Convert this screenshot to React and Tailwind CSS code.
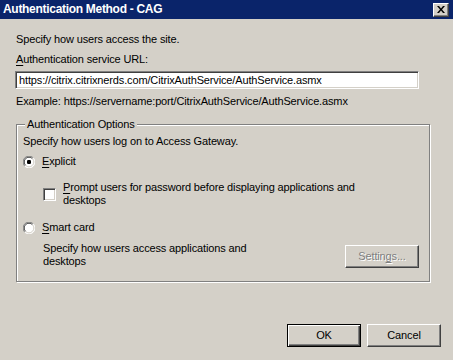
import React from "react";

function Radio({ checked }) {
  return (
    <div className="relative w-[12px] h-[12px] shrink-0">
      <svg width="12" height="12" viewBox="0 0 12 12" className="block">
        <circle cx="6" cy="6" r="5.5" fill="#fff" />
        <path d="M10.2 1.8 A5.5 5.5 0 0 0 1.8 10.2" fill="none" stroke="#808080" strokeWidth="1" />
        <path d="M9.4 2.6 A4.5 4.5 0 0 0 2.6 9.4" fill="none" stroke="#404040" strokeWidth="1" />
        <path d="M1.8 10.2 A5.5 5.5 0 0 0 10.2 1.8" fill="none" stroke="#ffffff" strokeWidth="1" />
        <path d="M2.6 9.4 A4.5 4.5 0 0 0 9.4 2.6" fill="none" stroke="#d4d0c8" strokeWidth="1" />
        {checked && <rect x="4" y="4" width="4" height="4" rx="1.2" fill="#000" />}
      </svg>
    </div>
  );
}

function Checkbox() {
  return (
    <div className="w-[13px] h-[13px] shrink-0 bg-white border border-t-[#808080] border-l-[#808080] border-r-white border-b-white shadow-[inset_1px_1px_0_#404040,inset_-1px_-1px_0_#d4d0c8]" />
  );
}

function Button({ children, isDefault, disabled }) {
  const cls = isDefault
    ? "border border-black shadow-[inset_1px_1px_0_#fff,inset_-1px_-1px_0_#404040,inset_-2px_-2px_0_#808080]"
    : "border border-t-white border-l-white border-r-[#404040] border-b-[#404040] shadow-[inset_-1px_-1px_0_#808080]";
  return (
    <div
      className={`w-[74px] h-[23px] flex items-center justify-center bg-[#d4d0c8] ${cls} ${
        disabled ? "text-[#808080] [text-shadow:1px_1px_0_#fff]" : "text-black"
      }`}
    >
      {children}
    </div>
  );
}

export default function App() {
  return (
    <div className="w-[453px] h-[360px] bg-[#d4d0c8] flex flex-col font-['Liberation_Sans',Arial,sans-serif] text-[11px] leading-[13px] tracking-[-0.14px] text-black overflow-hidden">
      {/* Title bar */}
      <div className="h-[19px] bg-[#0a246a] flex items-center justify-between pl-[3px] pr-[4px] shrink-0">
        <span className="text-white font-bold text-[12px] leading-[15px] tracking-[-0.3px]">
          Authentication Method - CAG
        </span>
        <div className="w-[16px] h-[14px] bg-[#d4d0c8] border border-t-white border-l-white border-r-[#404040] border-b-[#404040] shadow-[inset_-1px_-1px_0_#808080] flex items-center justify-center">
          <svg width="8" height="7" viewBox="0 0 8 7" className="block">
            <path d="M0 0h2l2 2.5L6 0h2L5 3.5 8 7H6L4 4.5 2 7H0l3-3.5z" fill="#000" />
          </svg>
        </div>
      </div>

      {/* Body */}
      <div className="flex flex-col px-[15px]">
        <p className="mt-[14px] pl-[1px]">Specify how users access the site.</p>
        <p className="mt-[7px] pl-[1px]">
          <span className="underline underline-offset-[2px]">A</span>uthentication service URL:
        </p>
        <div className="mt-[5px] w-[404px] h-[18px] bg-white border border-t-[#808080] border-l-[#808080] border-r-white border-b-white shadow-[inset_1px_1px_0_#404040,inset_-1px_-1px_0_#d4d0c8] flex items-center px-[3px] whitespace-nowrap">
          https://citrix.citrixnerds.com/CitrixAuthService/AuthService.asmx
        </div>
        <p className="mt-[6px] pl-[1px]">
          Example: https://servername:port/CitrixAuthService/AuthService.asmx
        </p>

        <fieldset className="mt-[10px] ml-[1px] w-[414px] border border-[#808080] shadow-[inset_1px_1px_0_#fff,1px_1px_0_#fff] px-[6px] pb-[13px]">
          <legend className="ml-[2px] px-[2px] bg-[#d4d0c8] leading-[13px]">Authentication Options</legend>
          <p className="mt-[4px]">Specify how users log on to Access Gateway.</p>

          <div className="mt-[7px] flex items-center gap-[7px]">
            <Radio checked />
            <span>
              <span className="underline underline-offset-[2px]">E</span>xplicit
            </span>
          </div>

          <div className="mt-[13px] ml-[20px] flex items-center gap-[7px]">
            <Checkbox />
            <span className="whitespace-nowrap">
              <span className="underline underline-offset-[2px]">P</span>rompt users for password before displaying applications and
              <br />
              desktops
            </span>
          </div>

          <div className="mt-[14px] flex items-center gap-[7px]">
            <Radio />
            <span>
              <span className="underline underline-offset-[2px]">S</span>mart card
            </span>
          </div>

          <div className="mt-[8px] flex items-start justify-between">
            <span className="ml-[20px] whitespace-nowrap">
              Specify how users access applications and
              <br />
              desktops
            </span>
            <div className="mt-[3px] mr-[4px]">
              <Button disabled>
                <span>
                  Settin<span className="underline underline-offset-[2px]">g</span>s...
                </span>
              </Button>
            </div>
          </div>
        </fieldset>
      </div>

      {/* Footer */}
      <div className="mt-[42px] flex justify-end gap-[6px] pr-[12px]">
        <Button isDefault>OK</Button>
        <Button>Cancel</Button>
      </div>
    </div>
  );
}
